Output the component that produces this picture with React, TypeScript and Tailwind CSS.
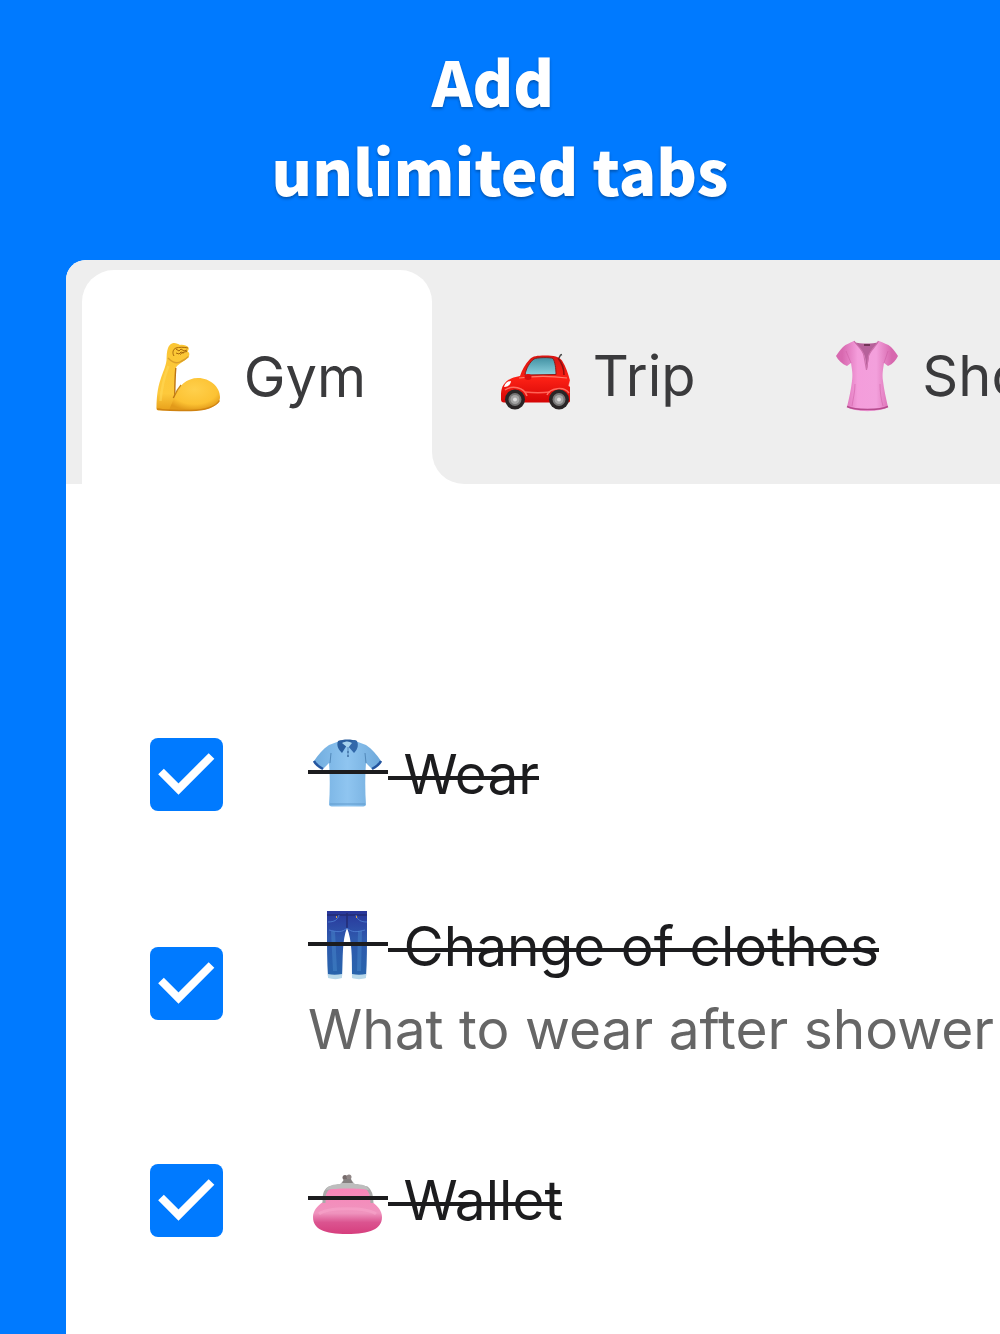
import { useState, type ReactNode } from "react";
import clsx from "clsx";

const EmojiSvg = ({ label, children }: { label: string; children: ReactNode }) => (
  <svg viewBox="0 0 80 80" role="img" aria-label={label} className="h-20 w-20 shrink-0">
    {children}
  </svg>
);

const BicepsIcon = () => (
  <EmojiSvg label="Flexed biceps">
    <defs>
      <linearGradient id="arm" x1="0" y1="0" x2="0" y2="1">
        <stop offset="0" stopColor="#fbc634" />
        <stop offset="0.75" stopColor="#fdc93c" />
        <stop offset="1" stopColor="#e8a01a" />
      </linearGradient>
      <radialGradient id="bicep" cx="0.5" cy="0.35" r="0.65">
        <stop offset="0" stopColor="#ffd04c" />
        <stop offset="0.7" stopColor="#fcc233" />
        <stop offset="1" stopColor="#e29a1a" />
      </radialGradient>
    </defs>
    <path
      d="M24 6.500c3-1.200 6 .5 8 1.500 3-.5 7 .5 8.500 2.500.8 1.500-.2 2.500-.8 4 1.800 1 2.300 3 .8 5.500-2.500 3-6 4.500-9 7-1.800 1.500-3.500 2-3.700 5-.6 9-.8 18-.8 26L30 73l-19 .5c-2 0-3-1.500-2.500-4 .2-8 .8-18 4-27 2.500-8 5-12 6-19 .2-5 .2-9 1.500-12.500 1-2.500 2.500-4 4-4.500z"
      fill="url(#arm)"
    />
    <path d="M27 59c3-10 12-18 23-18 12 0 22 9 22 19 0 9-13 13.500-29 13.500-8 0-16-.3-22-.5" fill="url(#bicep)" />
    <path d="M27.800 31c-.8 9-1 18-1 27l-1.500 3" fill="none" stroke="#bd7513" strokeWidth="1.400" />
    <path d="M27 58c1.500-4 3.500-7 6-10" fill="none" stroke="#c98718" strokeWidth="1.200" />
    <path d="M9 72c9 1.500 20 1.500 34 1.500 14 0 25-4 28.500-10" fill="none" stroke="#d08311" strokeWidth="1.400" />
    <path d="M20 21c4 4 9 6 13 3.500 3-1.500 6-3.500 7.500-5" fill="none" stroke="#dba02a" strokeWidth="1.400" />
    <path d="M26 19c-2-3-1-7 2-8 3-1 8-1 12 0M28 12l3 2 2-2 3 2 3-1M28 16l3 1 2-2 3 1M39 14.500c-3 .3-5 1.500-7 3" fill="none" stroke="#a9690c" strokeWidth="1" />
    <path d="M12.500 64c1-13 4-25 8-35" fill="none" stroke="#ffdc5b" strokeWidth="2.500" opacity="0.5" />
  </EmojiSvg>
);

const CarIcon = () => (
  <EmojiSvg label="Car">
    <defs>
      <linearGradient id="carBody" x1="0" y1="0" x2="0" y2="1">
        <stop offset="0" stopColor="#d91512" />
        <stop offset="0.5" stopColor="#fb2015" />
        <stop offset="1" stopColor="#d40505" />
      </linearGradient>
      <linearGradient id="carGlass" x1="0" y1="0" x2="0" y2="1">
        <stop offset="0" stopColor="#4291a3" />
        <stop offset="1" stopColor="#8dd2df" />
      </linearGradient>
    </defs>
    <path d="M62 22l1.500-3 1.500-.5" fill="none" stroke="#444" strokeWidth="1.500" />
    <path
      d="M4 60c0-6 1-10 4-13 3-4 9-6 15-7 2-6 5-12 10-17 3-3 7-3.500 15-3.500 9 0 14 1 17 5 4 6 6 13 8 20v20c0 2-1 2-3 2H7c-2 0-3-1-3-3z"
      fill="url(#carBody)"
    />
    <path d="M28 39c1-7 5-13 9-16 2-1.500 16-2 19-.5 2 3 3 10 3 16z" fill="url(#carGlass)" stroke="#8b1d1b" strokeWidth="1" />
    <path d="M61 22c4 5 6 10 6 17" fill="none" stroke="#8f0e0e" strokeWidth="1.500" />
    <path d="M22 42c14-2 34-2 48 0" fill="none" stroke="#ff7a6a" strokeWidth="1.200" />
    <path d="M28 56c10 1 16 1 25 0" fill="none" stroke="#ff6357" strokeWidth="1.500" />
    <path d="M8 54c7-5 19-3 22 6M50 59c3-7 17-9 22-2" fill="none" stroke="#ff6c5f" strokeWidth="1.500" />
    <ellipse cx="31" cy="41" rx="3.500" ry="3" fill="#d90d0d" />
    <path d="M7 51c1-4 4-6 7-6-.5 4-3 6-7 6z" fill="#fff" />
    <path d="M72.500 44l.8 7-1.800-1z" fill="#fff" opacity="0.8" />
    {[18, 62].map((cx) => (
      <g key={cx}>
        <circle cx={cx} cy="63.500" r="10" fill="#292526" />
        <circle cx={cx} cy="63.500" r="6.500" fill="#777" />
        <circle cx={cx} cy="63.500" r="4.500" fill="#a5a5a5" />
        <circle cx={cx} cy="63.500" r="2" fill="#ddd" />
      </g>
    ))}
  </EmojiSvg>
);

const BlouseIcon = () => (
  <EmojiSvg label="Blouse">
    <defs>
      <linearGradient id="blouse" x1="0" y1="0" x2="1" y2="0">
        <stop offset="0.100" stopColor="#d869b0" />
        <stop offset="0.350" stopColor="#f49ddb" />
        <stop offset="0.650" stopColor="#f3a0dc" />
        <stop offset="0.900" stopColor="#d768ae" />
      </linearGradient>
    </defs>
    <path d="M27 6c7 2 18 2 25 0L40 34z" fill="#b6619a" />
    <path
      d="M27 5C23 7 19 8 16 11 13 14 11 17 9 20c2 4 6 8 11 10l4-3c1 7 2 11 1 18-1 9-3 17-5 26 7 5.500 34 5.500 41 0-2-9-4-17-5-26-1-7 0-11 1-18l4 3c5-2 8-6 10-10-2-3-4-6-7-9-3-3-8-4-12-6-3 5-8 8-10 14l-2 15-2-13C36 14 30 10 27 5z"
      fill="url(#blouse)"
    />
    <path d="M27 5c3 5 9 8 10 15l2.500 14 2-14c2-6 7-9 10-15" fill="none" stroke="#cc71ac" strokeWidth="1.200" />
    <path d="M37 8h6v2h-6z" fill="#733658" />
    <path d="M20 70.500c8 4 33 4 41 0" fill="none" stroke="#b64b8e" strokeWidth="1.500" />
    <path d="M24 27l-5-12M57 27l4-12M28 48c0 8-2 15-3 22M53 48c0 8 1 15 3 22" fill="none" stroke="#cb5ca1" strokeWidth="1" opacity="0.5" />
  </EmojiSvg>
);

const PoloIcon = () => (
  <EmojiSvg label="T-shirt">
    <defs>
      <linearGradient id="polo" x1="0" y1="0" x2="1" y2="0">
        <stop offset="0" stopColor="#71addf" />
        <stop offset="0.500" stopColor="#8fc5f0" />
        <stop offset="1" stopColor="#6da8da" />
      </linearGradient>
    </defs>
    <path d="M29 8l-8 3C15 15 10 21 6 27c2 4 5 6 9 8l6-6c1 13 1 28 0 42 1 1.500 2 1.500 4 1.500h29c2 0 3 0 4-1.500-1-14-1-29 0-42l6 6c4-2 7-4 9-8-4-6-9-12-15-16l-8-3z" fill="url(#polo)" />
    <path d="M6 27c2 4 5 6 9 8M73 27c-2 4-5 6-9 8" fill="none" stroke="#24559f" strokeWidth="2.500" />
    <path d="M30 7c5-2 14-2 19 0l-4 9-6-5-5 8c-3-3-6-7-4-12z" fill="#2a5e9e" />
    <path d="M49 7c2 5 0 9-3 12l-7-8 7-5z" fill="#3268aa" />
    <path d="M34 9c4-2 7-2 10 0l-4 5z" fill="#a6d2ed" />
    <path d="M40 13v10M22 29l1-10M58 29l-1-10" fill="none" stroke="#5289ba" strokeWidth="1" />
    <circle cx="40" cy="18" r="0.8" fill="#28568c" />
    <circle cx="40" cy="22" r="0.8" fill="#28568c" />
    <path d="M22 70h35" stroke="#609bcd" strokeWidth="1" />
  </EmojiSvg>
);

const JeansIcon = () => (
  <EmojiSvg label="Jeans">
    <defs>
      <linearGradient id="denim" x1="0" y1="0" x2="0" y2="1">
        <stop offset="0" stopColor="#29369a" />
        <stop offset="0.400" stopColor="#2e58ad" />
        <stop offset="1" stopColor="#2865ac" />
      </linearGradient>
    </defs>
    <path d="M19 5h40v18c0 17 0 33-1 48-4 1.500-10 1.500-14 0 0-20 0-37-5-49-5 12-4 29-5 49-4 1.500-10 1.500-14 0-1-15-1-31-1-48z" fill="url(#denim)" />
    <path d="M19 9h40M39 7v15" stroke="#232b73" strokeWidth="1.500" />
    <path d="M20 16c6 0 10-2 11-7M59 16c-6 0-10-2-11-7M39 22c-5 5-10 4-18 2M39 22c5 5 10 4 18 2" fill="none" stroke="#4a78cd" strokeWidth="1" />
    <path d="M25 25l2 40M52 25l-1 40" stroke="#4e91d2" strokeWidth="4" opacity="0.4" />
    <path d="M20 68c4 1 9 1 14 0v4c-4 1.500-9 1.500-14 0zM44 68c5 1 9 1 14 0v4c-4 1.500-10 1.500-14 0z" fill="#b9d9ea" />
    <path d="M28 11h1M48 11h1" stroke="#d4a14f" strokeWidth="2" />
  </EmojiSvg>
);

const PurseIcon = () => (
  <EmojiSvg label="Purse">
    <defs>
      <linearGradient id="purse" x1="0" y1="0" x2="0" y2="1">
        <stop offset="0" stopColor="#fa85b9" />
        <stop offset="0.550" stopColor="#ef94be" />
        <stop offset="0.750" stopColor="#db5490" />
        <stop offset="1" stopColor="#d63e7d" />
      </linearGradient>
    </defs>
    <path d="M19 29c10-2 31-2 41 0l4 13c6 4 10 9 10 15 0 12-12 17-35 17S5 69 5 57c0-6 4-11 10-15z" fill="url(#purse)" />
    <path d="M16 43c0-7 0-12 5-15 5-2 10-2 19-2s14 0 19 2c4 3 5 8 5 15" fill="none" stroke="#a9a9a9" strokeWidth="3" />
    <path d="M18 30c1-4 8-6 14-6l3-3h9l3 3c7 0 13 2 14 6-10-2-33-2-43 0z" fill="#bdbdbd" />
    <circle cx="37" cy="17.500" r="2.500" fill="#776c6c" />
    <circle cx="41" cy="17" r="2.500" fill="#908686" />
    <path d="M36 19h7l2 4H34z" fill="#858080" />
    <path d="M11 54c8-7 48-7 57 0" fill="none" stroke="#ffb6d8" strokeWidth="3" opacity="0.300" />
  </EmojiSvg>
);

const tabs = [
  { name: "Gym", icon: <BicepsIcon /> },
  { name: "Trip", icon: <CarIcon /> },
  { name: "Shopping", icon: <BlouseIcon /> },
];

const initialItems = [
  { id: "wear", title: "Wear", note: "", done: true, icon: <PoloIcon /> },
  { id: "clothes", title: "Change of clothes", note: "What to wear after shower", done: true, icon: <JeansIcon /> },
  { id: "wallet", title: "Wallet", note: "", done: true, icon: <PurseIcon /> },
];

const TabLabel = ({ name, icon }: { name: string; icon: ReactNode }) => (
  <>
    {icon}
    <span className="whitespace-pre"> {name}</span>
  </>
);

const TabBar = () => {
  const [active, ...others] = tabs;

  return (
    <div role="tablist" className="flex h-56 overflow-hidden rounded-tl-[20px] text-[56px] text-[#3a3a3c]">
      <div className="w-4 shrink-0 bg-[#eeeeee]" />
      <div className="shrink-0 bg-[#eeeeee] pt-[10px]">
        {/* sits on the grey bar so its top corners show through */}
        <button role="tab" aria-selected="true" className="flex h-full items-center rounded-t-[32px] bg-white px-[66px]">
          <TabLabel {...active} />
        </button>
      </div>
      <div className="shrink-0 bg-white">
        <div className="flex h-full rounded-bl-[32px] bg-[#eeeeee] pt-2">
          {others.map((tab) => (
            <button key={tab.name} role="tab" aria-selected="false" className="flex items-center pr-[66px] pl-[65px]">
              <TabLabel {...tab} />
            </button>
          ))}
        </div>
      </div>
    </div>
  );
};

const App = () => {
  const [items, setItems] = useState(initialItems);

  const toggle = (id: string) =>
    setItems((prev) => prev.map((item) => (item.id === id ? { ...item, done: !item.done } : item)));

  return (
    <div className="flex min-h-screen flex-col overflow-hidden bg-[#007aff] font-['Inter',sans-serif]">
      <h1 className="pt-9 pb-[46px] text-center font-['Noto_Sans_CJK_JP',sans-serif] text-[62px] leading-[89px] font-black text-white [text-shadow:0_2px_3px_rgba(0,0,0,0.3)]">
        Add&nbsp;
        <br />
        unlimited tabs
      </h1>

      <main className="ml-[66px] flex-1 rounded-tl-[20px] bg-white">
        <TabBar />

        <ul className="pt-[204px] pl-[84px]">
          {items.map((item) => (
            <li key={item.id} className={clsx("flex items-center gap-[85px] pt-10", item.note ? "pb-12" : "pb-10")}>
              <span className="grid shrink-0">
                <input
                  id={item.id}
                  type="checkbox"
                  checked={item.done}
                  onChange={() => toggle(item.id)}
                  className="peer col-start-1 row-start-1 h-[73px] w-[73px] appearance-none rounded-lg border-8 border-[#666666] checked:border-0 checked:bg-[#007aff]"
                />
                <svg
                  viewBox="0 0 73 73"
                  aria-hidden="true"
                  className="pointer-events-none invisible col-start-1 row-start-1 h-[73px] w-[73px] peer-checked:visible"
                >
                  <path d="M11 33.500l17.500 17.500L61.500 18" fill="none" stroke="#fff" strokeWidth="8" />
                </svg>
              </span>
              <div className="text-[55px] whitespace-nowrap">
                <label htmlFor={item.id} className="flex h-[92px] items-center leading-[92px] text-[#1c1c1e]">
                  <span className="relative">
                    {item.icon}
                    {item.done && <span className="absolute inset-x-0 top-9 h-1 bg-[#1c1c1e]" />}
                  </span>
                  <span className="relative whitespace-pre">
                    {" "}
                    {item.title}
                    {item.done && <span className="absolute inset-x-0 top-12 h-1 bg-[#1c1c1e]" />}
                  </span>
                </label>
                {item.note && <p className="leading-[74px] text-[#666666]">{item.note}</p>}
              </div>
            </li>
          ))}
        </ul>
      </main>
    </div>
  );
};

export default App;
